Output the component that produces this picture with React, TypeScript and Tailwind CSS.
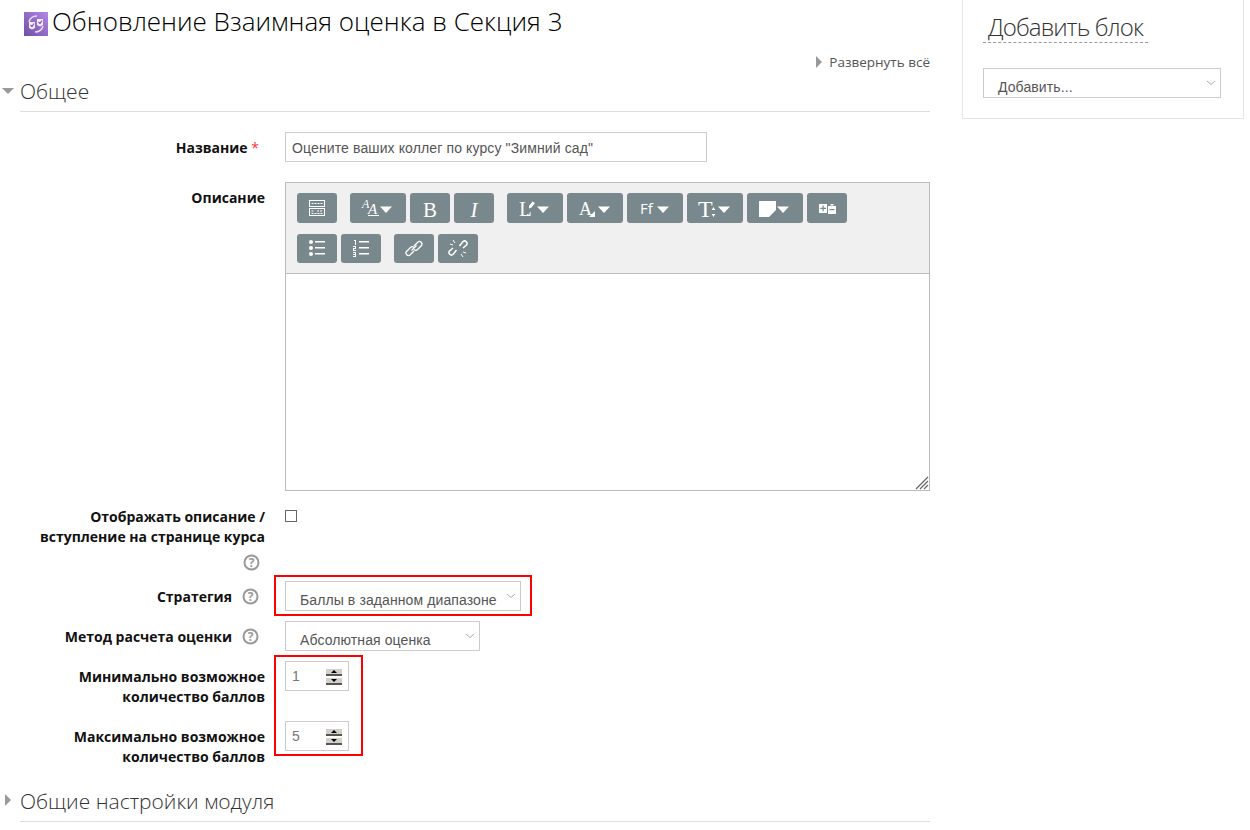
import React from "react";

const CARET = "M30 13.500h12l-6 6.500z";

const ICONS: Record<string, React.ReactNode> = {
  toolbar: (
    <g fill="none" stroke="#fff" strokeWidth="1">
      <rect x="12.500" y="7.500" width="15" height="6" />
      <rect x="12.500" y="15.500" width="15" height="7" />
      <path d="M14.500 10.500h11M14.500 18h3M20 18h5M14.500 20.500h11" strokeDasharray="2 1" />
    </g>
  ),
  style: (
    <g fill="#fff">
      <text x="12" y="15" fontSize="12" fontStyle="italic" fontFamily="'Liberation Serif', serif">A</text>
      <text x="18" y="21" fontSize="15" fontStyle="italic" fontFamily="'Liberation Serif', serif">A</text>
      <rect x="18" y="22" width="11" height="1" />
      <path d={CARET} />
    </g>
  ),
  bold: <text x="20" y="24" textAnchor="middle" fill="#fff" fontSize="21" fontFamily="'Liberation Serif', serif">B</text>,
  italic: <text x="20" y="24" textAnchor="middle" fill="#fff" fontSize="21" fontStyle="italic" fontFamily="'Liberation Serif', serif">I</text>,
  align: (
    <g fill="#fff">
      <text x="12" y="23" fontSize="21" fontFamily="'Liberation Serif', serif">L</text>
      <path d="M22 13l3.500-4.500 2.500 1.500-3.500 4.500-2.500 1zM20 21h1.500v1.500H20z" />
      <path d={CARET} />
    </g>
  ),
  color: (
    <g fill="#fff">
      <text x="12" y="22" fontSize="18" fontFamily="'Liberation Serif', serif">A</text>
      <path d="M28 18v6h-6z" />
      <path d="M31 13.500h12l-6 6.500z" />
    </g>
  ),
  font: (
    <g fill="#fff">
      <text x="13" y="21" fontSize="15" fontWeight="400" fontFamily="'Open Sans', sans-serif">Ff</text>
      <path d={CARET} />
    </g>
  ),
  size: (
    <g fill="#fff">
      <text x="11" y="24" fontSize="24" fontFamily="'Liberation Serif', serif">T</text>
      <path d="M26.500 14l1.800 3h-3.600zM26.500 24l1.800-3h-3.600z" />
      <path d="M31 13.500h12l-6 6.500z" />
    </g>
  ),
  note: (
    <g fill="#fff">
      <path d="M12 8h17v9l-7 7H12z" />
      <path d={CARET} />
    </g>
  ),
  table: (
    <g fill="#fff">
      <path d="M12 11h8v9h-8zM21 13h8v8h-8zM23.500 11h3v1.500h-3z" />
      <path d="M15.500 12.500h1.200v2.300H19V16h-2.300v2.300h-1.200V16h-2.300v-1.200h2.300z" fill="#78888c" />
      <path d="M22.500 16h5v1.200h-5z" fill="#78888c" />
    </g>
  ),
  ul: (
    <g fill="#fff">
      <circle cx="14" cy="8" r="2" />
      <circle cx="14" cy="14" r="2" />
      <circle cx="14" cy="20" r="2" />
      <path d="M18 7h10v1.500H18zM18 13h10v1.500H18zM18 19h10v1.500H18z" />
    </g>
  ),
  ol: (
    <g fill="#fff">
      <path d="M13 6h2v5h-1V7h-1zM12 12h3v3h-2v1h2v1h-3v-3h2v-1h-2zM12 18h3v5h-3v-1h2v-1h-2v-1h2v-1h-2z" />
      <path d="M18 7h10v1.500H18zM18 13h10v1.500H18zM18 19h10v1.500H18z" />
    </g>
  ),
  link: (
    <g fill="none" stroke="#fff" strokeWidth="1.300">
      <path d="M19 17l-4 4a2.500 2.500 0 0 1-3.500-3.500l4-4a2.500 2.500 0 0 1 3.500 0" transform="translate(1 0)" />
      <path d="M21 12l4-4a2.500 2.500 0 0 1 3.500 3.500l-4 4a2.500 2.500 0 0 1-3.500 0" transform="translate(-1 0)" />
      <path d="M17.500 16.500l5-5" />
    </g>
  ),
  unlink: (
    <g fill="none" stroke="#fff" strokeWidth="1.500">
      <path d="M18.500 16l-3.500 4.500a2.500 2.500 0 0 1-3.500-3.500l3.500-3" />
      <path d="M21.500 12l3.500-4.500a2.500 2.500 0 0 1 3.500 3.500l-3.500 3" />
      <path d="M15 6l2 3M12 10l3 1M25 23l-2-3M28 19l-3-1" strokeWidth="1" />
    </g>
  ),
};

const Tool = ({ icon, wide = false, short = false }: { icon: string; wide?: boolean; short?: boolean }) => (
  <div className={`rounded-[3px] bg-[#78888c] ${short ? "h-[29px]" : "h-[30px]"} ${wide ? "w-14" : "w-10"}`}>
    <svg width={wide ? 56 : 40} height="29" viewBox={`0 0 ${wide ? 56 : 40} 29`}>
      {ICONS[icon]}
    </svg>
  </div>
);

const Help = () => (
  <svg width="17" height="17" viewBox="0 0 17 17" className="-m-px shrink-0">
    <circle cx="8.500" cy="8.500" r="7" fill="none" stroke="#999" strokeWidth="2" />
    <text x="8.500" y="13" textAnchor="middle" fontSize="12" fontWeight="700" fill="#999" fontFamily="'Open Sans', sans-serif">?</text>
  </svg>
);

const Chevron = () => (
  <svg width="10" height="6" viewBox="0 0 10 6" className="absolute right-[4px] top-[11px]">
    <path d="M1 1l4 3.500L9 1" fill="none" stroke="#aaa" strokeWidth="1" />
  </svg>
);

const Select = ({ label, className }: { label: string; className: string }) => (
  <div className={`relative h-[30px] whitespace-nowrap border border-[#ccc] bg-white pl-[14px] pt-[9px] font-['Liberation_Sans',sans-serif] text-sm leading-[18px] tracking-[0.1px] text-[#555] ${className}`}>
    {label}
    <Chevron />
  </div>
);

const SpinButton = ({ up }: { up?: boolean }) => (
  <div className="flex h-2 items-center justify-center border-t border-b-2 border-t-white border-b-[#555] bg-[#d4d0c8]">
    <div
      className={
        up
          ? "h-0 w-0 border-x-[3px] border-b-[3px] border-x-transparent border-b-black"
          : "h-0 w-0 border-x-[3px] border-t-[3px] border-x-transparent border-t-black"
      }
    />
  </div>
);

const Spinner = ({ value }: { value: string }) => (
  <div className="relative flex h-[30px] w-16 items-center border border-[#ccc] bg-white pl-[6px] font-['Liberation_Sans',sans-serif] text-sm text-[#777]">
    {value}
    <div className="absolute left-[40px] top-[6px] flex w-4 flex-col gap-px">
      <SpinButton up />
      <SpinButton />
    </div>
  </div>
);

const Label = ({ children, help }: { children: React.ReactNode; help?: boolean }) => (
  <div className="flex w-[265px] shrink-0 justify-end gap-[11px] pt-[6px] text-right text-sm font-bold leading-5 text-[#111]">
    <div>{children}</div>
    {help && (
      <div className="w-[22px] shrink-0 pt-[2px]">
        <Help />
      </div>
    )}
  </div>
);

const Heading = ({ title, open }: { title: string; open?: boolean }) => (
  <div className="flex h-9 items-start">
    <div className="w-5 shrink-0">
      {open ? (
        <div className="ml-[2px] mt-3 h-0 w-0 border-x-[6px] border-t-[6px] border-x-transparent border-t-[#999]" />
      ) : (
        <div className="ml-[5px] mt-2 h-0 w-0 border-y-[6px] border-l-[6px] border-y-transparent border-l-[#999]" />
      )}
    </div>
    <div className="h-9 flex-1 border-b border-[#ddd] text-[21px] font-light leading-[30px] text-[#333]">
      {title}
    </div>
  </div>
);

export default function App() {
  return (
    <div className="flex h-[830px] w-[1250px] overflow-hidden bg-white font-['Open_Sans',sans-serif]">
      <div className="w-[930px] shrink-0">
        <div className="flex h-12 items-start pl-6 pt-[12px]">
          <svg width="24" height="24" viewBox="0 0 24 24" className="shrink-0">
            <defs>
              <linearGradient id="peer" x1="0" y1="1" x2="1" y2="0">
                <stop offset="0" stopColor="#6f4fa3" />
                <stop offset="1" stopColor="#b488e8" />
              </linearGradient>
            </defs>
            <rect width="24" height="24" fill="url(#peer)" />
            <path d="M5 10c1-4 4-6 8-6M19 14c-1 4-4 6-8 6" fill="none" stroke="#e8dcf6" strokeWidth="1.500" />
            <path d="M5 10h6v6l-3 1.500L5 16zM13 7h6v6l-3 1.500L13 13z" fill="#f3edfb" />
            <path d="M6.500 13l1.500 1.500 2-3M14.500 10l1.500 1.500 2-3" fill="none" stroke="#7b57b4" strokeWidth="1.200" />
          </svg>
          <h1 className="ml-1 whitespace-nowrap text-[26px] font-light leading-[18px] text-black">
            Обновление Взаимная оценка в Секция 3
          </h1>
        </div>

        <div className="flex h-7 items-center justify-end gap-[7px] text-[13.500px] text-[#555]">
          <div className="h-0 w-0 border-y-[6px] border-l-[6px] border-y-transparent border-l-[#999]" />
          <span>Развернуть всё</span>
        </div>

        <Heading title="Общее" open />

        <div className="mt-[20px] flex items-center gap-5">
          <div className="w-[265px] pr-[6px] pt-px text-right text-sm font-bold leading-5 text-[#111]">
            Название <span className="font-normal text-[#f33]">*</span>
          </div>
          <div className="flex h-[30px] w-[422px] items-center border border-[#ccc] px-[6px] pt-px font-['Liberation_Sans',sans-serif] text-sm tracking-[0.12px] text-[#555]">
            Оцените ваших коллег по курсу "Зимний сад"
          </div>
        </div>

        <div className="mt-[20px] flex gap-5">
          <div className="w-[265px] pt-[6px] text-right text-sm font-bold leading-5 text-[#111]">Описание</div>
          <div className="flex h-[309px] w-[645px] flex-col border border-[#bbb]">
            <div className="flex h-[91px] flex-col gap-[11px] border-b border-[#bbb] bg-[#f0f0f0] pl-[11px] pt-[10px]">
              <div className="flex gap-[13px]">
                <Tool icon="toolbar" />
                <div className="flex gap-1">
                  <Tool icon="style" wide />
                  <Tool icon="bold" />
                  <Tool icon="italic" />
                </div>
                <div className="flex gap-1">
                  <Tool icon="align" wide />
                  <Tool icon="color" wide />
                  <Tool icon="font" wide />
                  <Tool icon="size" wide />
                  <Tool icon="note" wide />
                  <Tool icon="table" />
                </div>
              </div>
              <div className="flex gap-[13px]">
                <div className="flex gap-1">
                  <Tool icon="ul" short />
                  <Tool icon="ol" short />
                </div>
                <div className="flex gap-1">
                  <Tool icon="link" short />
                  <Tool icon="unlink" short />
                </div>
              </div>
            </div>
            <div className="relative flex-1 bg-white">
              <svg width="14" height="14" viewBox="0 0 14 14" className="absolute bottom-0 right-0">
                <path d="M13 1L1 13M13 5l-8 8M13 9l-4 4" stroke="#666" strokeWidth="1.200" />
              </svg>
            </div>
          </div>
        </div>

        <div className="mt-[16px] flex gap-5">
          <div className="w-[265px] text-right text-sm font-bold leading-5 text-[#111]">
            <div>Отображать описание /</div>
            <div>вступление на странице курса</div>
            <div className="mt-[8px] flex justify-end pr-[6px]">
              <Help />
            </div>
          </div>
          <div className="mt-[3px] h-3 w-3 border border-[#666] bg-white" />
        </div>

        <div className="mt-[11px] flex gap-5">
          <Label help>Стратегия</Label>
          <div className="relative">
            <Select label="Баллы в заданном диапазоне" className="w-[236px]" />
            <div className="absolute -left-[11px] -top-[6px] h-[41px] w-[258px] border-2 border-[#f00]" />
          </div>
        </div>

        <div className="mt-[10px] flex gap-5">
          <Label help>Метод расчета оценки</Label>
          <Select label="Абсолютная оценка" className="w-[195px]" />
        </div>

        <div className="mt-[10px] flex gap-5">
          <Label>
            Минимально возможное
            <br />
            количество баллов
          </Label>
          <div className="relative">
            <Spinner value="1" />
            <div className="absolute -left-[11px] -top-[6px] h-[101px] w-[89px] border-2 border-[#f00]" />
          </div>
        </div>

        <div className="mt-[14px] flex gap-5">
          <Label>
            Максимально возможное
            <br />
            количество баллов
          </Label>
          <Spinner value="5" />
        </div>

        <div className="mt-[19px]">
          <Heading title="Общие настройки модуля" />
        </div>
      </div>

      <div className="ml-8 h-[119px] w-[282px] shrink-0 border-x border-b border-[#e5e5e5] pl-5">
        <div className="mt-[11px] h-[32px] w-[165px] whitespace-nowrap border-b border-dashed border-[#999] pl-[5px] text-2xl font-light leading-[32px] tracking-[-0.9px] text-[#333]">
          Добавить блок
        </div>
        <Select label="Добавить..." className="mt-[25px] w-[238px]" />
      </div>
    </div>
  );
}
